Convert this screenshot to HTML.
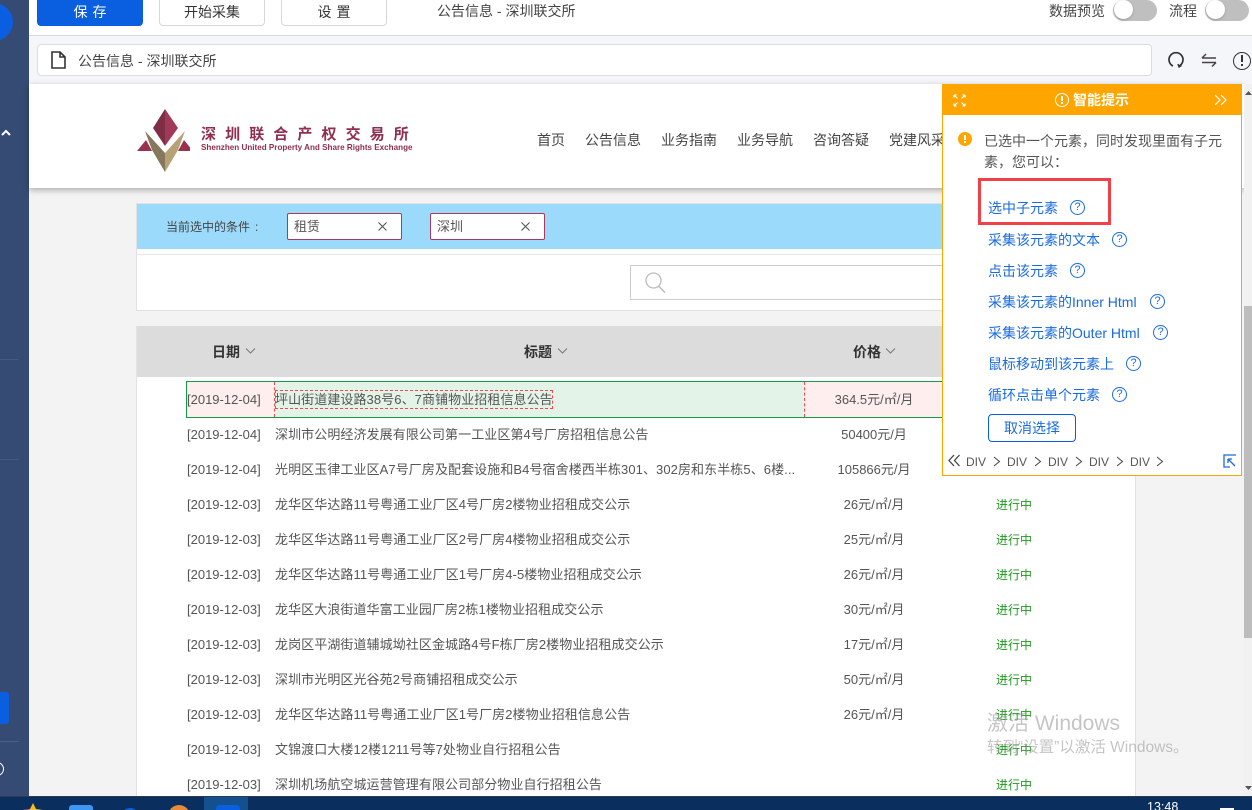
<!DOCTYPE html>
<html lang="zh"><head><meta charset="utf-8"><title>公告信息 - 深圳联交所</title>
<style>
html,body{margin:0;padding:0;width:1252px;height:810px;overflow:hidden;background:#f3f3f3}
body{position:relative;font-family:"Liberation Sans","Noto Sans CJK SC",sans-serif;font-size:13px;color:#555}
div,span,svg{position:absolute;box-sizing:border-box}
.t{white-space:nowrap;line-height:18px}
.btn{top:-6px;height:32px;width:106px;background:#fff;border:1px solid #d8d8d8;border-radius:4px;text-align:center;line-height:34px;font-size:14px;color:#333}
.d{left:187px;color:#555;margin-top:1px}
.n{left:275px;color:#555;margin-top:1px;letter-spacing:.08px}
.p{width:130px;left:809px;text-align:center;color:#555;margin-top:1px}
.s{left:996px;color:#1d9a1d;font-size:12px;margin-top:1px}
.hd{font-size:14px;font-weight:bold;color:#333}
.lnk{left:988px;color:#1a6be0;font-size:14px;margin-top:1px}
.q{width:15px;height:15px;border:1.5px solid #1a6be0;border-radius:50%;color:#1a6be0;font-size:11px;line-height:12px;text-align:center}
.nv{top:131px;font-size:14px;color:#444}
.dv{top:453px;font-size:12px;color:#555}
</style></head><body>

<div style="left:0;top:0;width:29px;height:796px;background:#364b73"></div>
<div style="left:-25px;top:3px;width:38px;height:38px;border-radius:50%;background:#0a5fe0"></div>
<svg style="left:0;top:128px" width="12" height="10"><path d="M2 7 L6 3 L10 7" fill="none" stroke="#fff" stroke-width="2"/></svg>
<div style="left:0;top:359px;width:19px;height:1px;background:#45597f"></div>
<div style="left:0;top:459px;width:19px;height:1px;background:#45597f"></div>
<div style="left:-4px;top:692px;width:13px;height:32px;border-radius:3px;background:#0a5fe0"></div>
<div style="left:0;top:741px;width:19px;height:1px;background:#4c5f84"></div>
<div style="left:-10px;top:762px;width:14px;height:14px;border:1.5px solid #fff;border-radius:50%"></div>

<div style="left:29px;top:0;width:1223px;height:36px;background:#fff;border-bottom:1px solid #d9dae0"></div>
<div class="btn" style="left:37px;background:#0a5fe0;border-color:#0a5fe0;color:#fff;letter-spacing:5px;padding-left:5px">保存</div>
<div class="btn" style="left:159px">开始采集</div>
<div class="btn" style="left:281px;letter-spacing:5px;padding-left:5px">设置</div>
<div class="t" style="left:437px;top:2px;font-size:14px;color:#444">公告信息 - 深圳联交所</div>
<div class="t" style="left:1049px;top:2px;font-size:14px;color:#444">数据预览</div>
<div style="left:1113px;top:0;width:44px;height:21px;border-radius:11px;background:#bfbfbf"></div>
<div style="left:1114px;top:0;width:19px;height:19px;border-radius:50%;background:#fff;box-shadow:0 1px 2px #999"></div>
<div class="t" style="left:1169px;top:2px;font-size:14px;color:#444">流程</div>
<div style="left:1205px;top:0;width:44px;height:21px;border-radius:11px;background:#bfbfbf"></div>
<div style="left:1206px;top:0;width:19px;height:19px;border-radius:50%;background:#fff;box-shadow:0 1px 2px #999"></div>

<div style="left:29px;top:36px;width:1223px;height:48px;background:#f5f6fa"></div>
<div style="left:37px;top:44px;width:1115px;height:32px;background:#fff;border:1px solid #dcdde2;border-radius:4px"></div>
<svg style="left:50px;top:50px" width="17" height="20" viewBox="0 0 17 20"><path d="M2 2 H10 L15 7 V18 H2 Z M10 2 V7 H15" fill="none" stroke="#333" stroke-width="1.6"/></svg>
<div class="t" style="left:78px;top:52px;font-size:14px;color:#444">公告信息 - 深圳联交所</div>
<svg style="left:1166px;top:50px" width="20" height="20" viewBox="0 0 20 20"><path d="M7 16 A7 7 0 1 1 13 16" fill="none" stroke="#333" stroke-width="1.7"/><path d="M12 14 L13 17 L15.5 15.5" fill="none" stroke="#333" stroke-width="1.4"/></svg>
<svg style="left:1200px;top:51px" width="18" height="18" viewBox="0 0 18 18"><path d="M2 7 H16 M2 7 L6 3 M2 11.500 H16 M16 11.500 L12 15.500" fill="none" stroke="#444" stroke-width="1.5"/></svg>
<div style="left:1233px;top:52px;width:18px;height:18px;border:1.7px solid #333;border-radius:50%"></div>
<div style="left:1241px;top:55px;width:2px;height:7px;background:#333"></div>
<div style="left:1241px;top:64px;width:2px;height:2px;background:#333"></div>

<div style="left:29px;top:84px;width:1215px;height:104px;background:#fff;box-shadow:0 2px 6px rgba(0,0,0,.3)"></div>
<svg style="left:130px;top:100px" width="60" height="80" viewBox="130 100 60 80">
<polygon points="165,109 153,128 165,146" fill="#7f2f45"/>
<polygon points="165,109 178,128 165,146" fill="#a03a58"/>
<polygon points="145,131 165,153 165,172 152,150" fill="#85785c"/>
<polygon points="185,131 165,153 165,172 178,150" fill="#b7a277"/>
<polygon points="137,151 146,140 152,151" fill="#98324f"/>
<polygon points="193,151 184,140 178,151" fill="#98324f"/>
</svg>
<div class="t" style="left:201px;top:126px;font-size:15px;font-weight:bold;color:#8f2f4e;letter-spacing:9.1px">深圳联合产权交易所</div>
<div class="t" style="left:201px;top:139px;font-size:8.1px;font-weight:bold;color:#8f2f4e">Shenzhen United Property And Share Rights Exchange</div>
<div class="t nv" style="left:537px">首页</div>
<div class="t nv" style="left:585px">公告信息</div>
<div class="t nv" style="left:661px">业务指南</div>
<div class="t nv" style="left:737px">业务导航</div>
<div class="t nv" style="left:813px">咨询答疑</div>
<div class="t nv" style="left:889px">党建风采</div>

<div style="left:136px;top:203px;width:1000px;height:108px;background:#fff;border:1px solid #e2e2e2"></div>
<div style="left:137px;top:204px;width:998px;height:45px;background:#9cdafb"></div>
<div style="left:137px;top:254px;width:998px;height:1px;background:#e8e8e8"></div>
<div class="t" style="left:166px;top:218px;color:#444;font-size:12px">当前选中的条件</div>
<div class="t" style="left:255px;top:218px;color:#444;font-size:12px">:</div>
<div style="left:287px;top:213px;width:115px;height:27px;background:#fff;border:1px solid #a93a5c;border-radius:2px"></div>
<div class="t" style="left:294px;top:218px;color:#555">租赁</div>
<svg style="left:377px;top:221px" width="11" height="11"><path d="M1.500 1.500 L9.500 9.500 M9.500 1.500 L1.500 9.500" stroke="#555" stroke-width="1.1"/></svg>
<div style="left:430px;top:213px;width:115px;height:27px;background:#fff;border:1px solid #a93a5c;border-radius:2px"></div>
<div class="t" style="left:437px;top:218px;color:#555">深圳</div>
<svg style="left:520px;top:221px" width="11" height="11"><path d="M1.500 1.500 L9.500 9.500 M9.500 1.500 L1.500 9.500" stroke="#555" stroke-width="1.1"/></svg>
<div style="left:630px;top:265px;width:320px;height:35px;background:#fff;border:1px solid #ccc"></div>
<svg style="left:643px;top:270px" width="26" height="26"><circle cx="10.500" cy="10.500" r="7.500" fill="none" stroke="#bbb" stroke-width="1.300"/><path d="M15.500 16 L22 22.500" stroke="#bbb" stroke-width="1.500"/></svg>

<div style="left:136px;top:326px;width:1000px;height:470px;background:#fff;border-left:1px solid #e2e2e2;border-right:1px solid #e2e2e2"></div>
<div style="left:137px;top:326px;width:998px;height:51px;background:#dcdcdc"></div>
<div class="t hd" style="left:212px;top:343px">日期</div>
<svg style="left:245px;top:347px" width="11" height="8"><path d="M1 1.500 L5.500 6 L10 1.500" fill="none" stroke="#777"/></svg>
<div class="t hd" style="left:524px;top:343px">标题</div>
<svg style="left:557px;top:347px" width="11" height="8"><path d="M1 1.500 L5.500 6 L10 1.500" fill="none" stroke="#777"/></svg>
<div class="t hd" style="left:853px;top:343px">价格</div>
<svg style="left:885px;top:347px" width="11" height="8"><path d="M1 1.500 L5.500 6 L10 1.500" fill="none" stroke="#777"/></svg>

<div style="left:186px;top:381px;width:760px;height:37px;background:#e4f3e8;border:1px solid #159a48"></div>
<div style="left:187px;top:382px;width:88px;height:35px;background:#ffeeee;border-right:1px dashed #f04a4a"></div>
<div style="left:804px;top:382px;width:140px;height:35px;background:#ffeeee;border-left:1px dashed #f04a4a"></div>
<div style="left:275px;top:390px;width:278px;height:19px;border:1px dashed #f04a4a"></div>

<div class="t d" style="top:390px">[2019-12-04]</div><div class="t n" style="top:390px">坪山街道建设路38号6、7商铺物业招租信息公告</div><div class="t p" style="top:390px">364.5元/㎡/月</div>
<div class="t d" style="top:425px">[2019-12-04]</div><div class="t n" style="top:425px">深圳市公明经济发展有限公司第一工业区第4号厂房招租信息公告</div><div class="t p" style="top:425px">50400元/月</div>
<div class="t d" style="top:460px">[2019-12-04]</div><div class="t n" style="top:460px">光明区玉律工业区A7号厂房及配套设施和B4号宿舍楼西半栋301、302房和东半栋5、6楼...</div><div class="t p" style="top:460px">105866元/月</div>
<div class="t d" style="top:495px">[2019-12-03]</div><div class="t n" style="top:495px">龙华区华达路11号粤通工业厂区4号厂房2楼物业招租成交公示</div><div class="t p" style="top:495px">26元/㎡/月</div><div class="t s" style="top:495px">进行中</div>
<div class="t d" style="top:530px">[2019-12-03]</div><div class="t n" style="top:530px">龙华区华达路11号粤通工业厂区2号厂房4楼物业招租成交公示</div><div class="t p" style="top:530px">25元/㎡/月</div><div class="t s" style="top:530px">进行中</div>
<div class="t d" style="top:565px">[2019-12-03]</div><div class="t n" style="top:565px">龙华区华达路11号粤通工业厂区1号厂房4-5楼物业招租成交公示</div><div class="t p" style="top:565px">26元/㎡/月</div><div class="t s" style="top:565px">进行中</div>
<div class="t d" style="top:600px">[2019-12-03]</div><div class="t n" style="top:600px">龙华区大浪街道华富工业园厂房2栋1楼物业招租成交公示</div><div class="t p" style="top:600px">30元/㎡/月</div><div class="t s" style="top:600px">进行中</div>
<div class="t d" style="top:635px">[2019-12-03]</div><div class="t n" style="top:635px">龙岗区平湖街道辅城坳社区金城路4号F栋厂房2楼物业招租成交公示</div><div class="t p" style="top:635px">17元/㎡/月</div><div class="t s" style="top:635px">进行中</div>
<div class="t d" style="top:670px">[2019-12-03]</div><div class="t n" style="top:670px">深圳市光明区光谷苑2号商铺招租成交公示</div><div class="t p" style="top:670px">50元/㎡/月</div><div class="t s" style="top:670px">进行中</div>
<div class="t d" style="top:705px">[2019-12-03]</div><div class="t n" style="top:705px">龙华区华达路11号粤通工业厂区1号厂房2楼物业招租信息公告</div><div class="t p" style="top:705px">26元/㎡/月</div><div class="t s" style="top:705px">进行中</div>
<div class="t d" style="top:740px">[2019-12-03]</div><div class="t n" style="top:740px">文锦渡口大楼12楼1211号等7处物业自行招租公告</div><div class="t s" style="top:740px">进行中</div>
<div class="t d" style="top:775px">[2019-12-03]</div><div class="t n" style="top:775px">深圳机场航空城运营管理有限公司部分物业自行招租公告</div><div class="t s" style="top:775px">进行中</div>

<div style="left:1244px;top:84px;width:8px;height:712px;background:#f1f1f1"></div>
<div style="left:1244px;top:306px;width:8px;height:332px;background:#bdbdbd"></div>
<svg style="left:1245px;top:90px" width="7" height="6"><path d="M0 5 L3.500 1 L7 5 Z" fill="#555"/></svg>
<svg style="left:1245px;top:785px" width="7" height="6"><path d="M0 1 L3.500 5 L7 1 Z" fill="#555"/></svg>

<div style="left:942px;top:84px;width:300px;height:392px;background:#fff;border:1px solid #ffa500;border-top:0"></div>
<div style="left:942px;top:84px;width:300px;height:31px;background:#ffa500"></div>
<svg style="left:953px;top:94px" width="13" height="13" viewBox="0 0 13 13"><path d="M1 1 L4.500 4.500 M1 1 H3.500 M1 1 V3.500 M12 1 L8.500 4.500 M12 1 H9.500 M12 1 V3.500 M1 12 L4.500 8.500 M1 12 H3.500 M1 12 V9.500 M12 12 L8.500 8.500 M12 12 H9.500 M12 12 V9.500" fill="none" stroke="#fff" stroke-width="1.200"/></svg>
<div style="left:1055px;top:93px;width:14px;height:14px;border:1px solid #fff;border-radius:50%"></div>
<div style="left:1061px;top:96px;width:2px;height:5px;background:#fff"></div>
<div style="left:1061px;top:102px;width:2px;height:2px;background:#fff"></div>
<div class="t" style="left:1073px;top:91px;font-size:14px;font-weight:bold;color:#fff">智能提示</div>
<svg style="left:1214px;top:94px" width="13" height="12" viewBox="0 0 13 12"><path d="M1 1 L6 6 L1 11 M7 1 L12 6 L7 11" fill="none" stroke="#fff" stroke-width="1.200"/></svg>

<div style="left:958px;top:132px;width:14px;height:14px;border-radius:50%;background:#ffa500"></div>
<div style="left:964px;top:135px;width:2px;height:5px;background:#fff"></div>
<div style="left:964px;top:141px;width:2px;height:2px;background:#fff"></div>
<div class="t" style="left:984px;top:131px;font-size:14px;line-height:21px;color:#555;width:245px;white-space:normal;font-family:'Liberation Sans','Noto Sans CJK TC',sans-serif">已选中一个元素，同时发现里面有子元素，您可以：</div>
<div style="left:978px;top:178px;width:133px;height:47px;border:3px solid #f04048"></div>

<div class="t lnk" style="top:198px">选中子元素</div><div class="q" style="left:1070px;top:200px">?</div>
<div class="t lnk" style="top:230px">采集该元素的文本</div><div class="q" style="left:1112px;top:232px">?</div>
<div class="t lnk" style="top:261px">点击该元素</div><div class="q" style="left:1070px;top:263px">?</div>
<div class="t lnk" style="top:292px">采集该元素的Inner Html</div><div class="q" style="left:1150px;top:294px">?</div>
<div class="t lnk" style="top:323px">采集该元素的Outer Html</div><div class="q" style="left:1153px;top:325px">?</div>
<div class="t lnk" style="top:354px">鼠标移动到该元素上</div><div class="q" style="left:1126px;top:356px">?</div>
<div class="t lnk" style="top:385px">循环点击单个元素</div><div class="q" style="left:1112px;top:387px">?</div>
<div style="left:988px;top:414px;width:88px;height:28px;border:1px solid #0a5fe0;border-radius:4px;text-align:center;line-height:26px;font-size:14px;color:#1a6be0">取消选择</div>

<svg style="left:948px;top:454px" width="13" height="13" viewBox="0 0 13 13"><path d="M6 1 L1 6.500 L6 12 M11.500 1 L6.500 6.500 L11.500 12" fill="none" stroke="#444" stroke-width="1.300"/></svg>
<div class="t dv" style="left:966px">DIV</div><svg style="left:993px;top:456px" width="8" height="11"><path d="M1 1 L6.500 5.500 L1 10" fill="none" stroke="#444"/></svg>
<div class="t dv" style="left:1007px">DIV</div><svg style="left:1034px;top:456px" width="8" height="11"><path d="M1 1 L6.500 5.500 L1 10" fill="none" stroke="#444"/></svg>
<div class="t dv" style="left:1048px">DIV</div><svg style="left:1075px;top:456px" width="8" height="11"><path d="M1 1 L6.500 5.500 L1 10" fill="none" stroke="#444"/></svg>
<div class="t dv" style="left:1089px">DIV</div><svg style="left:1116px;top:456px" width="8" height="11"><path d="M1 1 L6.500 5.500 L1 10" fill="none" stroke="#444"/></svg>
<div class="t dv" style="left:1130px">DIV</div><svg style="left:1156px;top:456px" width="8" height="11"><path d="M1 1 L6.500 5.500 L1 10" fill="none" stroke="#444"/></svg>
<svg style="left:1223px;top:454px" width="14" height="14" viewBox="0 0 14 14"><path d="M13 1 H1 V13 H7 M5 5 L12 12 M5 5 H9 M5 5 V9" fill="none" stroke="#1a6be0" stroke-width="1.300"/></svg>

<div class="t" style="left:987px;top:712px;font-size:21px;line-height:24px;color:rgba(150,150,150,.55)">激活 Windows</div>
<div class="t" style="left:987px;top:739px;font-size:15.500px;line-height:18px;color:rgba(150,150,150,.55)">转到“设置”以激活 Windows。</div>

<div style="left:0;top:796px;width:1252px;height:14px;background:#0a2f5f;border-top:1px solid #2a3a50;overflow:hidden">
 <svg style="left:22px;top:6px" width="22" height="10" viewBox="0 0 22 10"><path d="M11 0 L14 6 L21 7 L16 12 H6 L1 7 L8 6 Z" fill="#f0c020"/><path d="M2 7 L7 6 L6 10 H2 Z" fill="#d8306a"/></svg>
 <div style="left:69px;top:8px;width:24px;height:18px;border-radius:3px;background:#3d96ef"></div>
 <div style="left:121px;top:11px;width:18px;height:18px;border-radius:50%;background:#0a5fe0"></div>
 <div style="left:168px;top:8px;width:22px;height:22px;border-radius:50%;background:#e88a3c"></div>
 <div style="left:204px;top:0;width:44px;height:14px;background:#14508e"></div>
 <div style="left:216px;top:8px;width:24px;height:20px;border-radius:3px;background:#0a5fe0"></div>
 <div class="t" style="left:1147px;top:3px;font-size:12.500px;line-height:14px;color:#fff">13:48</div>
 <div style="left:1220px;top:11px;width:14px;height:6px;background:#fff"></div>
</div>
</body></html>
